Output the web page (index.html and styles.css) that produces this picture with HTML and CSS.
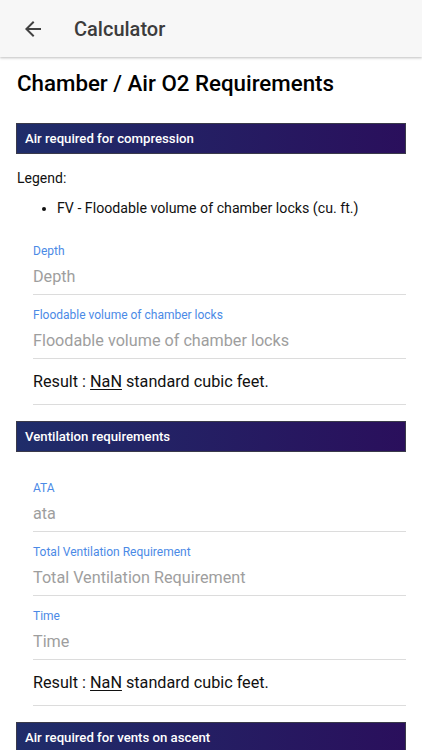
FILE: index.html
```html
<!DOCTYPE html>
<html>
<head>
<meta charset="utf-8">
<link rel="stylesheet" href="styles.css">
</head>
<body>
<header class="toolbar">
  <svg class="back" width="24" height="24" viewBox="0 0 24 24"><path d="M20 11H7.83l5.59-5.59L12 4l-8 8 8 8 1.41-1.41L7.83 13H20v-2z" fill="#424242"/></svg>
  <span class="toolbar-title">Calculator</span>
</header>
<main class="content">
  <h1 class="page-title">Chamber / Air O2 Requirements</h1>

  <div class="section-bar">Air required for compression</div>
  <p class="legend">Legend:</p>
  <ul class="legend-list"><li>FV - Floodable volume of chamber locks (cu. ft.)</li></ul>
  <div class="fields">
    <label class="field"><span class="field-label">Depth</span><span class="field-input">Depth</span></label>
    <label class="field"><span class="field-label">Floodable volume of chamber locks</span><span class="field-input">Floodable volume of chamber locks</span></label>
    <div class="result">Result : <u>NaN</u> standard cubic feet.</div>
  </div>

  <div class="section-bar">Ventilation requirements</div>
  <div class="fields fields-top">
    <label class="field"><span class="field-label">ATA</span><span class="field-input">ata</span></label>
    <label class="field"><span class="field-label">Total Ventilation Requirement</span><span class="field-input">Total Ventilation Requirement</span></label>
    <label class="field"><span class="field-label">Time</span><span class="field-input">Time</span></label>
    <div class="result">Result : <u>NaN</u> standard cubic feet.</div>
  </div>

  <div class="section-bar">Air required for vents on ascent</div>
</main>
</body>
</html>
```
FILE: styles.css
```css
* { box-sizing: border-box; }
html, body { margin: 0; padding: 0; background: #fff; }
body { font-family: Roboto, "Noto Sans", sans-serif; color: #111; width: 422px; height: 750px; overflow: hidden; }
.toolbar {
  height: 57px;
  background: #f7f7f7;
  display: flex;
  align-items: center;
  padding-left: 21px;
  box-shadow: 0 1px 2px rgba(0,0,0,0.18), 0 2px 3px rgba(0,0,0,0.06);
  position: relative;
  z-index: 1;
}
.back { display: block; margin-top: 1px; }
.toolbar-title { margin-left: 29px; font-size: 20px; font-weight: 500; color: #3c3c3c; }
.content { padding: 0 16px; }
.page-title { margin: 12px 0 0 1px; font-size: 22.3px; font-weight: 500; line-height: 28px; color: #000; }
.section-bar {
  margin-top: 26px;
  height: 31px;
  display: flex;
  align-items: center;
  padding-left: 8px;
  color: #fff;
  font-size: 13.2px;
  font-weight: 500;
  background: linear-gradient(90deg, #1f2d6a 0%, #2a0f5c 100%);
  border: 1px solid #3a3a4a;
}
.legend { margin: 15px 0 0 1px; font-size: 14px; line-height: 18px; }
.legend-list { margin: 12px 0 0; padding-left: 41px; font-size: 14.2px; line-height: 18px; }
.fields { padding-left: 17px; margin-top: 27px; }
.fields-top { margin-top: 29px; }
.field { display: flex; flex-direction: column; border-bottom: 1px solid #dcdcdc; margin-bottom: 13px; padding-bottom: 8px; }
.field-label { font-size: 12px; line-height: 15px; color: #4b8ae6; }
.field-input { margin-top: 8px; font-size: 16.2px; line-height: 19px; color: #9e9e9e; }
.result { font-size: 16.2px; line-height: 20px; padding: 0 0 12px; border-bottom: 1px solid #dcdcdc; margin-top: 1px; }
.result u { text-underline-offset: 2px; }
.fields + .section-bar { margin-top: 16px; }
```
